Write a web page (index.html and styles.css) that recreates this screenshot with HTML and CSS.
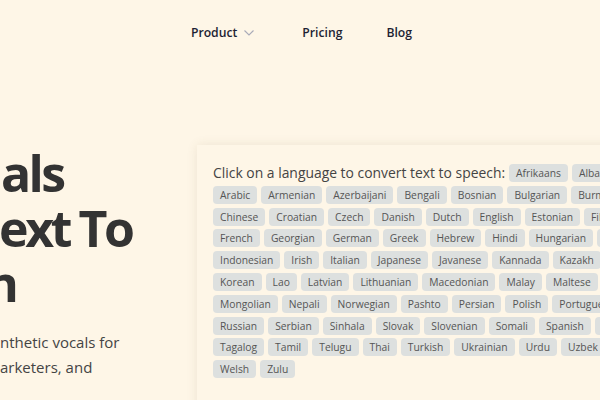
FILE: index.html
```html
<!DOCTYPE html>
<html lang="en">
<head>
<meta charset="utf-8">
<title>Text To Speech</title>
<link rel="stylesheet" href="styles.css">
</head>
<body>
<header class="topbar">
  <nav class="nav">
    <a class="nav-item nav-drop" href="#">Product
      <svg class="chev" width="10" height="6" viewBox="0 0 10 6"><path d="M0.5 0.5 L5 5 L9.5 0.5" fill="none" stroke="#a9aab8" stroke-width="1.1"/></svg>
    </a>
    <a class="nav-item" href="#">Pricing</a>
    <a class="nav-item" href="#">Blog</a>
  </nav>
</header>
<main class="hero">
  <section class="hero-text">
    <h1 class="headline">
      <span class="hl hl-1">als</span>
      <span class="hl hl-2">ext To</span>
      <span class="hl hl-3">n</span>
    </h1>
    <p class="lead"><span class="ld">nthetic vocals for</span><span class="ld">arketers, and</span></p>
  </section>
  <section class="card">
    <div class="row"><span class="label">Click on a language to convert text to speech:</span><a class="tag">Afrikaans</a><a class="tag">Albanian</a><a class="tag">Amharic</a></div>
    <div class="row"><a class="tag">Arabic</a><a class="tag">Armenian</a><a class="tag">Azerbaijani</a><a class="tag">Bengali</a><a class="tag">Bosnian</a><a class="tag">Bulgarian</a><a class="tag">Burmese</a><a class="tag">Catalan</a></div>
    <div class="row"><a class="tag">Chinese</a><a class="tag">Croatian</a><a class="tag">Czech</a><a class="tag">Danish</a><a class="tag">Dutch</a><a class="tag">English</a><a class="tag">Estonian</a><a class="tag">Filipino</a><a class="tag">Finnish</a></div>
    <div class="row"><a class="tag">French</a><a class="tag">Georgian</a><a class="tag">German</a><a class="tag">Greek</a><a class="tag">Hebrew</a><a class="tag">Hindi</a><a class="tag">Hungarian</a><a class="tag">Icelandic</a></div>
    <div class="row"><a class="tag">Indonesian</a><a class="tag">Irish</a><a class="tag">Italian</a><a class="tag">Japanese</a><a class="tag">Javanese</a><a class="tag">Kannada</a><a class="tag">Kazakh</a><a class="tag">Khmer</a></div>
    <div class="row"><a class="tag">Korean</a><a class="tag">Lao</a><a class="tag">Latvian</a><a class="tag">Lithuanian</a><a class="tag">Macedonian</a><a class="tag">Malay</a><a class="tag">Maltese</a><a class="tag">Marathi</a></div>
    <div class="row"><a class="tag">Mongolian</a><a class="tag">Nepali</a><a class="tag">Norwegian</a><a class="tag">Pashto</a><a class="tag">Persian</a><a class="tag">Polish</a><a class="tag">Portuguese</a><a class="tag">Romanian</a></div>
    <div class="row"><a class="tag">Russian</a><a class="tag">Serbian</a><a class="tag">Sinhala</a><a class="tag">Slovak</a><a class="tag">Slovenian</a><a class="tag">Somali</a><a class="tag">Spanish</a><a class="tag">Sundanese</a></div>
    <div class="row"><a class="tag">Tagalog</a><a class="tag">Tamil</a><a class="tag">Telugu</a><a class="tag">Thai</a><a class="tag">Turkish</a><a class="tag">Ukrainian</a><a class="tag">Urdu</a><a class="tag">Uzbek</a><a class="tag">Vietnamese</a></div>
    <div class="row"><a class="tag">Welsh</a><a class="tag">Zulu</a></div>
  </section>
</main>
</body>
</html>
```
FILE: styles.css
```css
html, body {
  margin: 0;
  padding: 0;
  background: #fef6e7;
  font-family: "Open Sans", "Noto Sans", sans-serif;
  overflow: hidden;
  width: 600px;
  height: 400px;
}
.topbar {
  height: 64px;
  display: flex;
  justify-content: center;
  align-items: center;
}
.nav {
  display: flex;
  align-items: center;
  gap: 44px;
  margin-left: 3px;
}
.nav-item {
  color: #1d1f33;
  text-decoration: none;
  font-size: 12.2px;
  font-weight: 600;
  display: flex;
  align-items: center;
}
.chev {
  margin-left: 7px;
  margin-right: 4px;
  margin-top: 1px;
}
.hero {
  margin-top: 81px;
  display: flex;
  align-items: flex-start;
  gap: 12px;
}
.hero-text {
  width: 185px;
  flex: none;
  overflow: hidden;
}
.headline {
  margin: 0;
  font-size: 50px;
  line-height: 55px;
  font-weight: 700;
  color: #333333;
  letter-spacing: -2.6px;
  padding-top: 1px;
}
.hl {
  display: block;
  white-space: nowrap;
}
.hl-1 { padding-left: 1px; }
.hl-2 { text-indent: -1px; letter-spacing: -3.4px; }
.hl-3 { text-indent: -14px; }
.lead {
  margin: 19px 0 0;
  font-size: 15px;
  line-height: 25px;
  color: #444444;
}
.ld { display: block; white-space: nowrap; }
.card {
  flex: none;
  width: 700px;
  height: 300px;
  padding: 18px 16px;
  background: #fef6e7;
  box-shadow: 0 0 10px rgba(120, 100, 60, 0.12);
  display: flex;
  flex-direction: column;
  gap: 3.8px;
}
.row {
  display: flex;
  align-items: center;
  gap: 4px;
  white-space: nowrap;
}
.label {
  font-size: 13.9px;
  color: #444444;
}
.tag {
  height: 18px;
  line-height: 18px;
  padding: 0 7px;
  background: #dde0df;
  border-radius: 4px;
  color: #555555;
  font-size: 10.3px;
  flex: none;
}
```
